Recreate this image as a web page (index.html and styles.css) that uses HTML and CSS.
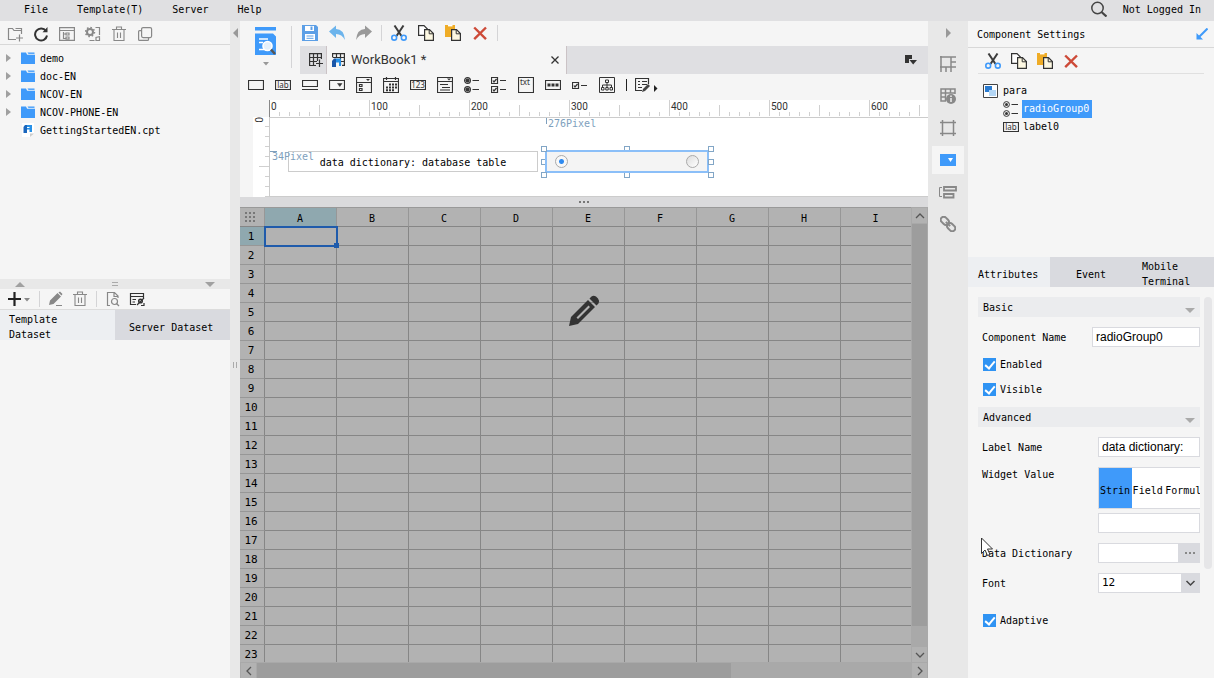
FILE: index.html
```html
<!DOCTYPE html>
<html lang="en">
<head>
<meta charset="utf-8">
<title>Report Designer</title>
<link rel="stylesheet" href="styles.css">
</head>
<body>
<svg class="sprite" aria-hidden="true">
  <symbol id="cut" viewBox="0 0 16 16"><path d="M3.5 0.5L10.5 11M12.5 0.5L5.5 11" stroke="#3c3c3c" stroke-width="2" fill="none"/><circle cx="3.2" cy="12.7" r="2.4" fill="none" stroke="#3f9afa" stroke-width="1.6"/><circle cx="12.8" cy="12.7" r="2.4" fill="none" stroke="#3f9afa" stroke-width="1.6"/></symbol>
  <symbol id="copy" viewBox="0 0 16 16"><path d="M0.6 0.6H6L9.4 4V10.4H0.6Z" fill="#fff" stroke="#333" stroke-width="1.2"/><path d="M6.6 4.6H11.5L15.4 8.5V15.4H6.6Z" fill="#fdf8e2" stroke="#333" stroke-width="1.2"/><path d="M11.2 4.6V8.8H15.4" fill="none" stroke="#333"/></symbol>
  <symbol id="paste" viewBox="0 0 16 16"><path d="M0 0H10V12H0Z" fill="#efac26"/><path d="M3 0H7.5V1.4H3Z" fill="#fff"/><path d="M6.6 4.6H11.5L15.4 8.5V15.4H6.6Z" fill="#fdf8e2" stroke="#333" stroke-width="1.2"/><path d="M11.2 4.6V8.8H15.4" fill="none" stroke="#333"/></symbol>
  <symbol id="remove" viewBox="0 0 16 16"><path d="M2.2 2.5L14 14.2M14 2.5L2.2 14.2" stroke="#cd4a38" stroke-width="2.4"/></symbol>
  <symbol id="trash" viewBox="0 0 16 16"><path d="M1 3.5H15M5.5 3V1H10.500V3M3 4V14.500H13V4M6.500 6.500V12M9.500 6.500V12" fill="none" stroke="#888" stroke-width="1.1"/></symbol>
  <symbol id="folder" viewBox="0 0 14 12"><path d="M0 0.500H5L6 2.500H14V12H0Z" fill="#3f9afa"/><path d="M6.500 0.500H13.500V2H7.500Z" fill="#3f9afa"/><path d="M6 2.300H14" stroke="#d5e9fd" stroke-width="0.800"/></symbol>
  <symbol id="radios" viewBox="0 0 16 16"><g fill="none" stroke="#333"><circle cx="3.500" cy="3.500" r="2.900"/><circle cx="3.500" cy="12.500" r="2.900"/><path d="M8.500 3.500H15M8.500 12.500H15" stroke-width="1.200"/></g><circle cx="3.500" cy="3.500" r="1.500" fill="#333"/><circle cx="3.500" cy="12.500" r="1.500" fill="#333"/></symbol>
</svg>

<header class="menubar">
  <nav class="menus">
    <button>File</button><button>Template(T)</button><button>Server</button><button>Help</button>
  </nav>
  <div class="account">
    <button aria-label="Search"><svg width="16" height="16" viewBox="0 0 16 16" fill="none" stroke="#444"><circle cx="6.500" cy="7" r="5.700" stroke-width="1.500"/><path d="M10.500 11L15.500 15.500" stroke-width="2.200"/></svg></button>
    <button>Not Logged In</button>
  </div>
</header>

<div class="workspace">
  <aside class="left">
    <div class="left-tools">
      <button aria-label="New folder"><svg width="16" height="16" viewBox="0 0 16 16" fill="none" stroke="#888" stroke-width="1.200"><path d="M9 13.500H1.500V2.500H5.500L7 4.500H14.500V8M8.500 2.500H14.500V4M12.500 8.500V15.500M9 12H16"/></svg></button>
      <button aria-label="Refresh"><svg width="16" height="16" viewBox="0 0 16 16"><path d="M13 5A6 6 0 1 0 14 9.500" fill="none" stroke="#333" stroke-width="2"/><path d="M9.500 6.300H14.500V1Z" fill="#333"/></svg></button>
      <button aria-label="Show in tree"><svg width="16" height="16" viewBox="0 0 16 16" fill="none" stroke="#888" stroke-width="1.200"><path d="M0.600 1.600H15.400V14.400H0.600ZM1 4.500H15M4.500 6V12.500H6.500M4.500 8H6.500M7 7H10V9H7ZM7 11H10V13H7Z"/></svg></button>
      <button aria-label="Settings"><svg width="16" height="16" viewBox="0 0 16 16" fill="none" stroke="#888"><circle cx="5" cy="6" r="3" stroke-width="2"/><circle cx="5" cy="6" r="4.500" stroke-dasharray="1.600 1.900" stroke-width="1.500"/><path d="M10.500 1.500H14.500V9M4.500 14.500H9.500M14.500 10.500V14.500H11V11.500L15 10.500" stroke-width="1.200"/></svg></button>
      <button aria-label="Delete"><svg width="16" height="16"><use href="#trash"/></svg></button>
      <button aria-label="Duplicate"><svg width="16" height="16" viewBox="0 0 16 16" fill="none" stroke="#888" stroke-width="1.200"><rect x="4.600" y="1.600" width="10" height="10" rx="1.500"/><path d="M4 4.600H2.500Q1.600 4.600 1.600 5.500V13.500Q1.600 14.400 2.500 14.400H10.500Q11.500 14.400 11.500 13.500V12"/></svg></button>
    </div>
    <ul class="files">
      <li><i class="twist"></i><svg width="14" height="12"><use href="#folder"/></svg>demo</li>
      <li><i class="twist"></i><svg width="14" height="12"><use href="#folder"/></svg>doc-EN</li>
      <li><i class="twist"></i><svg width="14" height="12"><use href="#folder"/></svg>NCOV-EN</li>
      <li><i class="twist"></i><svg width="14" height="12"><use href="#folder"/></svg>NCOV-PHONE-EN</li>
      <li><i class="twist leaf"></i><svg width="14" height="14" viewBox="0 0 14 14"><path d="M1 0H13V10L9 14H1Z" fill="#fff"/><path d="M9 10.500H13L9 14Z" fill="#ccc"/><path d="M2.500 10V4L4 2H6V10Z" fill="#1a66bd"/><path d="M6 2H11V9H8.500V6.500H6Z" fill="#2791e8"/><path d="M6 4H8.500V5H6Z" fill="#fff"/></svg>GettingStartedEN.cpt</li>
    </ul>
    <div class="left-split"><i class="tri up"></i><i class="grip"></i><i class="tri down"></i></div>
    <div class="data-tools">
      <button aria-label="Add"><svg width="24" height="14" viewBox="0 0 24 14"><path d="M7.500 0V14M1 7H14" stroke="#222" stroke-width="2.200"/><path d="M17 6H23L20 9.500Z" fill="#888"/></svg></button>
      <i class="sep"></i>
      <button aria-label="Edit"><svg width="16" height="16" viewBox="0 0 16 16"><path d="M1 14L2 9.500L9.500 2L13 5.500L5.500 13ZM10.500 1.500L12 0.500L14.500 3L13.500 4.500Z" fill="#888"/><path d="M8 14.500H14" stroke="#888"/></svg></button>
      <button aria-label="Delete"><svg width="16" height="16"><use href="#trash"/></svg></button>
      <i class="sep"></i>
      <button aria-label="Preview"><svg width="16" height="16" viewBox="0 0 16 16" fill="none" stroke="#888" stroke-width="1.200"><path d="M5 14.500H2.500V1.500H9.500L13 5V7M9 2V5.500H13"/><circle cx="9.500" cy="10.500" r="3"/><path d="M11.500 12.500L14 15"/></svg></button>
      <button aria-label="Connection"><svg width="16" height="16" viewBox="0 0 16 16" fill="none" stroke="#333" stroke-width="1.200"><path d="M7 13.500H1.500V2.500H14.500V7M1.500 5.500H14M3.500 8.500H7M3.500 11H6"/><circle cx="11.500" cy="10" r="1.800" stroke-width="1.500"/><path d="M8 14L15 7M12 14.500H15V12"/></svg></button>
    </div>
    <div class="tabs dataset-tabs" role="tablist">
      <button class="on" role="tab">Template Dataset</button><button role="tab">Server Dataset</button>
    </div>
  </aside>

  <div class="splitter"><i class="tri left-tri"></i><i class="grip side"></i></div>

  <main class="center">
    <div class="top">
      <button class="preview" aria-label="Preview"><svg width="24" height="40" viewBox="0 0 24 40"><path d="M1 0H22V3.500H1ZM1 6.500H19L22 9.500V28H1Z" fill="#3f9afa"/><path d="M5 12H14M5 15.500H9M5 22.500H14" stroke="#fff" stroke-width="1.700"/><circle cx="13.500" cy="19" r="4.500" fill="#e4f0fb" stroke="#fff" stroke-width="1.600"/><path d="M17 22.500L21 27" stroke="#555" stroke-width="2.500"/><path d="M9 35H15L12 38.500Z" fill="#999"/></svg></button>
      <div class="stack">
        <div class="edit-tools">
          <div class="group">
            <button aria-label="Save"><svg width="16" height="16" viewBox="0 0 16 16"><path d="M0 0H14L16 2V16H0Z" fill="#5c9fe6"/><path d="M3 1H12V6H3ZM3 9H13V15H3Z" fill="#fff"/><path d="M8.500 1.500H10.500V5H8.500Z" fill="#5c9fe6"/><path d="M4.500 11H11.500M4.500 13.300H11.500" stroke="#5c9fe6"/></svg></button>
            <button aria-label="Undo"><svg width="16" height="16" viewBox="0 0 16 16"><path d="M0 6.500L7 0.500V4Q15 4 16 15Q13 9 7 9V13Z" fill="#6cb4ec"/></svg></button>
            <button aria-label="Redo"><svg width="16" height="16" viewBox="0 0 16 16"><path d="M16 6.500L9 0.500V4Q1 4 0 15Q3 9 9 9V13Z" fill="#999"/></svg></button>
          </div>
          <i class="sep"></i>
          <div class="group">
            <button aria-label="Cut"><svg width="16" height="16"><use href="#cut"/></svg></button>
            <button aria-label="Copy"><svg width="16" height="16"><use href="#copy"/></svg></button>
            <button aria-label="Paste"><svg width="16" height="16"><use href="#paste"/></svg></button>
            <button aria-label="Delete"><svg width="16" height="16"><use href="#remove"/></svg></button>
          </div>
          <i class="sep"></i>
        </div>
        <div class="doc-tabs">
          <button class="new-tab" aria-label="New workbook"><svg width="14" height="14" viewBox="0 0 14 14" fill="none" stroke="#333" stroke-width="1.200"><path d="M7 12.500H0.600V0.600H12.400V6M0.600 4.500H12.400M0.600 8.500H8M4.500 0.600V12.500M8.500 0.600V8M10.500 6.500V14M7 10.500H14"/></svg></button>
          <div class="doc-tab">
            <svg width="14" height="14" viewBox="0 0 14 14"><path d="M0.600 4V0.600H12.400V12.400H10M0.600 4.500H12.400M8 8.500H12.400M4.500 0.600V4M8.500 0.600V12" fill="none" stroke="#333" stroke-width="1.200"/><path d="M0 14V8L2 5.500H4V14Z" fill="#1a56a8"/><path d="M4 5.500H9V13H7V9.500H4Z" fill="#2791e8"/></svg>
            <span>WorkBook1 *</span>
            <button aria-label="Close"><svg width="8" height="8" viewBox="0 0 8 8"><path d="M0.500 0.500L7.500 7.500M7.500 0.500L0.500 7.500" stroke="#333" stroke-width="1.300"/></svg></button>
          </div>
          <button class="tab-list" aria-label="Tab list"><svg width="12" height="10" viewBox="0 0 12 10"><path d="M0 0H7V4H4V8H0Z" fill="#333"/><path d="M4.500 5H12L8.200 9.500Z" fill="#333"/></svg></button>
        </div>
      </div>
    </div>

    <div class="widgets">
      <button aria-label="Text field"><svg viewBox="0 0 16 16"><path d="M0.500 3.500H15.500V12.500H0.500Z"/></svg></button>
      <button aria-label="Label"><svg viewBox="0 0 16 16"><path d="M0.500 3.500H15.500V12.500H0.500Z"/><text x="8" y="11" class="glyph-text">lab</text></svg></button>
      <button aria-label="Button"><svg viewBox="0 0 16 16"><path d="M0.500 3.500H15.500V9.500H0.500ZM0 12.500H16"/></svg></button>
      <button aria-label="Drop-down"><svg viewBox="0 0 16 16"><path d="M0.500 3.500H15.500V12.500H0.500Z"/><path d="M8.500 6.500H13L10.800 9.500Z" fill="#333" stroke-width=".5"/></svg></button>
      <button aria-label="Check drop-down"><svg viewBox="0 0 16 16"><path d="M0.500 0.500H15.500V15.500H0.500ZM0.500 5.500H15.500M3.500 7.500H6V9.500H3.500ZM3.500 11.500H6V13.500H3.500Z"/><path d="M10 2H14L12 4Z" fill="#333" stroke="none"/></svg></button>
      <button aria-label="Date"><svg viewBox="0 0 16 16"><path d="M0.500 1.500H15.500V15.500H0.500ZM0.500 4.500H15.500M3.500 0V3M12.500 0V3"/><path d="M6 7.500H14M3 10.500H14M3 13.200H11" stroke-dasharray="2 1" stroke-width="2"/></svg></button>
      <button aria-label="Number"><svg viewBox="0 0 16 16"><path d="M0.500 3.500H15.500V12.500H0.500Z"/><text x="8" y="11" class="glyph-text">123</text></svg></button>
      <button aria-label="Drop-down tree"><svg viewBox="0 0 16 16"><path d="M0.500 0.500H15.500V15.500H0.500ZM0.500 4.500H15.500M3 7.500H11M5 10.500H13M3 13H13"/><path d="M10 1.500H14L12 3.500Z" fill="#333" stroke="none"/></svg></button>
      <button aria-label="Radio group"><svg viewBox="0 0 16 16"><use href="#radios"/></svg></button>
      <button aria-label="Check group"><svg viewBox="0 0 16 16"><path d="M0.500 0.500H6.500V6.500H0.500ZM0.500 9.500H6.500V15.500H0.500ZM2 3.500L3 5L5.500 2M2 12.500L3 14L5.500 11M9 3.500H15M9 12.500H15"/></svg></button>
      <button aria-label="Text area"><svg viewBox="0 0 16 16"><path d="M0.500 0.500H15.500V15.500H0.500Z"/><text x="7" y="8" class="glyph-text">txt</text></svg></button>
      <button aria-label="Password"><svg viewBox="0 0 16 16"><path d="M0.500 3.500H15.500V12.500H0.500Z"/><path d="M2.500 8H14" stroke-width="3" stroke-dasharray="3 1"/></svg></button>
      <button aria-label="Check box"><svg viewBox="0 0 16 16"><path d="M0.500 5.500H6.500V11.500H0.500ZM2 8.500L3 10L5.500 7M9 8.500H15"/></svg></button>
      <button aria-label="Tree"><svg viewBox="0 0 16 16"><path d="M0.500 0.500H15.500V15.500H0.500ZM8 5V8M3.500 10V8H12.500V10M8 8V10M6.500 3H9.500V5.500H6.500ZM2.500 10.500H5V13H2.500ZM6.800 10.500H9.200V13H6.800ZM11 10.500H13.500V13H11Z" stroke-width="1"/></svg></button>
      <i class="bar"></i>
      <button aria-label="More widgets"><svg class="wide" viewBox="0 0 24 16"><path d="M13.500 7V1.500H0.500V13.500H7M3 4.500H5M7 4.500H12M3 7.500H5M7 7.500H12M3 10.500H7"/><path d="M7 15L8 12L13 7L15 9L10 14Z" fill="#444" stroke="none"/><path d="M19 8L22.500 11.500L19 15Z" fill="#222" stroke="none"/></svg></button>
    </div>

    <section class="designer">
      <div class="ruler-x"><span>0</span><span>100</span><span>200</span><span>300</span><span>400</span><span>500</span><span>600</span></div>
      <div class="ruler-y"><span>0</span></div>
      <div class="canvas">
        <div class="label-widget">data dictionary: database table</div>
        <span class="offset-x">276Pixel</span>
        <span class="offset-y">34Pixel</span>
        <div class="radio-widget">
          <i class="handle n mid"></i><i class="handle s mid"></i><i class="handle w mid"></i><i class="handle e"></i>
          <i class="handle n w"></i><i class="handle n e"></i><i class="handle s w"></i><i class="handle s e"></i>
          <input type="radio" name="preview" aria-label="First option" checked><input type="radio" name="preview" aria-label="Second option">
        </div>
      </div>
    </section>
    <div class="row-split"><i></i><i></i><i></i></div>

    <section class="sheet">
      <div class="cells">
        <table>
          <thead><tr id="columns"><th class="corner"><svg width="10" height="10" viewBox="0 0 10 10"><path d="M0 1H10M0 5H10M0 9H10" stroke="#777" stroke-width="2" stroke-dasharray="2 2"/></svg></th></tr></thead>
          <tbody id="rows"></tbody>
        </table>
      </div>
      <div class="scroll vertical"><button aria-label="Scroll up"><svg viewBox="0 0 10 10"><path d="M1 7L5 3L9 7"/></svg></button><i></i><button aria-label="Scroll down"><svg viewBox="0 0 10 10"><path d="M1 3L5 7L9 3"/></svg></button></div>
      <div class="scroll horizontal"><button aria-label="Scroll left"><svg viewBox="0 0 10 10"><path d="M7 1L3 5L7 9"/></svg></button><i></i><button aria-label="Scroll right"><svg viewBox="0 0 10 10"><path d="M3 1L7 5L3 9"/></svg></button></div>
      <svg class="pencil" width="32" height="32" viewBox="0 0 32 32"><path fill="#333" fill-rule="evenodd" d="M1 31L3 22L20 5L27 12L10 29ZM8.500 22.500L10 24L22 12L20.500 10.500ZM21.500 3.500L23.500 1.500Q25.500 0 28 1.500L30 3.500Q32 6 30.500 8.500L28.500 10.500Z"/></svg>
    </section>
  </main>

  <nav class="strip">
    <i class="tri right-tri"></i>
    <button aria-label="Cell element"><svg viewBox="0 0 16 16"><path d="M1 0V16M0 1H16M11 1V16M0 11H16M11 6H16M6 11V16"/></svg></button>
    <button aria-label="Cell attributes"><svg viewBox="0 0 16 16"><path d="M6 13H1V1H15V6M1 5H15M1 9H6M5.500 1V13M10.500 1V5"/><circle cx="11" cy="11" r="5" fill="#888" stroke="none"/><path d="M11 7.500V9M11 10V14" stroke="#eee"/></svg></button>
    <button aria-label="Float element"><svg viewBox="0 0 16 16"><path d="M2.500 0V16M13.500 0V16M0 2.500H16M0 13.500H16"/></svg></button>
    <button class="on" aria-label="Widget settings"><svg viewBox="0 0 16 16"><path d="M0 2H16V14H0Z" fill="#3f9afa" stroke="none"/><path d="M8 6H13L10.500 10Z" fill="#fff" stroke="none"/></svg></button>
    <button aria-label="Condition attributes"><svg class="broad" viewBox="0 0 18 16"><path d="M5 3H17V6.500H5ZM5 10H14.500V13.500H5Z" stroke-width="1.800"/><path d="M3 3.500H0.500V12.500H3" stroke-width="1"/></svg></button>
    <button aria-label="Hyperlink"><svg viewBox="0 0 16 16"><g transform="rotate(45 8 8)" stroke-width="2"><rect x="-1" y="5" width="9" height="6" rx="3"/><rect x="8" y="5" width="9" height="6" rx="3"/><path d="M5 8H11"/></g></svg></button>
  </nav>

  <aside class="right">
    <div class="panel-title"><h2>Component Settings</h2><button aria-label="Dock"><svg width="12" height="12" viewBox="0 0 12 12"><path d="M11.500 0.500L3 9" stroke="#3f9afa" stroke-width="2"/><path d="M0.500 5V11.500H7Z" fill="#3f9afa"/></svg></button></div>
    <div class="panel-tools">
      <button aria-label="Cut"><svg width="16" height="16"><use href="#cut"/></svg></button>
      <button aria-label="Copy"><svg width="16" height="16"><use href="#copy"/></svg></button>
      <button aria-label="Paste"><svg width="16" height="16"><use href="#paste"/></svg></button>
      <button aria-label="Delete"><svg width="16" height="16"><use href="#remove"/></svg></button>
    </div>
    <ul class="components">
      <li><svg width="15" height="14" viewBox="0 0 15 14"><path d="M0.500 0.500H14.500V13.500H0.500Z" fill="#fff" stroke="#444"/><path d="M2 2H9V8H2Z" fill="#2a7bd0"/><path d="M6 6H13V12H6Z" fill="#b3d6f5"/></svg>para
        <ul>
          <li><svg width="16" height="16"><use href="#radios"/></svg><span class="picked">radioGroup0</span></li>
          <li><svg width="16" height="16" viewBox="0 0 16 16"><path d="M0.500 3.500H15.500V12.500H0.500Z" fill="none" stroke="#333" stroke-width="1.200"/><text x="8" y="11" class="glyph-text">lab</text></svg><span>label0</span></li>
        </ul>
      </li>
    </ul>
    <div class="tabs prop-tabs" role="tablist">
      <button class="on" role="tab">Attributes</button><button role="tab">Event</button><button role="tab">Mobile Terminal</button>
    </div>
    <form class="props">
      <div class="fields">
        <h3>Basic<i class="tri down"></i></h3>
        <div class="row name-row"><label for="name">Component Name</label><input id="name" type="text" value="radioGroup0"></div>
        <label class="check"><input type="checkbox" checked>Enabled</label>
        <label class="check"><input type="checkbox" checked>Visible</label>
        <h3>Advanced<i class="tri down"></i></h3>
        <div class="row"><label for="label">Label Name</label><input id="label" type="text" value="data dictionary:"></div>
        <div class="row tall"><label for="value">Widget Value</label>
          <div class="value"><div class="segments"><button type="button" class="on">Strin</button><button type="button">Field</button><button type="button">Formul</button></div><input id="value" type="text"></div>
        </div>
        <div class="row"><label for="dict">Data Dictionary</label><div class="combo"><input id="dict" type="text"><button type="button" aria-label="Browse"><i></i><i></i><i></i></button></div>
          <svg class="pointer" width="12" height="20" viewBox="0 0 12 20"><path d="M0.500 1V16.500L4 13L6.500 18.500L9 17.500L6.500 12H11.500Z" fill="#fff" stroke="#333"/></svg>
        </div>
        <div class="row"><label for="font">Font</label><div class="combo"><select id="font"><option>12</option></select><svg class="chevron" width="19" height="18" viewBox="0 0 19 18"><path d="M5.500 7L9.500 11L13.500 7" fill="none" stroke="#444" stroke-width="1.500"/></svg></div></div>
        <label class="check last"><input type="checkbox" checked>Adaptive</label>
      </div>
      <i class="thumb"></i>
    </form>
  </aside>
</div>
<script src="sheet.js"></script>
</body>
</html>
```

FILE: styles.css
```css
* { box-sizing: border-box; }
body { margin: 0; height: 100vh; display: flex; flex-direction: column; overflow: hidden; background: #f5f5f5; color: #000; font: 10px/15px "DejaVu Sans Mono", monospace; }
button { font: inherit; color: inherit; background: none; border: 0; padding: 0; margin: 0; }
ul { list-style: none; margin: 0; padding: 0; }
h2, h3 { margin: 0; font: inherit; }
svg { display: block; flex: none; }
i { display: block; flex: none; }
.sprite { position: absolute; width: 0; height: 0; }
.glyph-text { font: 8px "Noto Sans", sans-serif; text-anchor: middle; fill: #333; stroke: none; }
.sep { width: 1px; height: 16px; background: #d4d4d6; }
.tri { width: 0; height: 0; border: 5px solid transparent; }
.tri.up { border-top: 0; border-bottom-color: #a0a0a0; }
.tri.down { border-bottom: 0; border-top-color: #a0a0a0; }

.menubar { flex: none; height: 21px; display: flex; justify-content: space-between; align-items: center; padding: 0 13px 3px 24px; background: #e0e0e2; }
.menus { display: flex; gap: 29px; }
.account { display: flex; align-items: center; gap: 16px; }
.workspace { flex: 1; min-height: 0; display: flex; }

.left { width: 230px; flex: none; display: flex; flex-direction: column; }
.left-tools { height: 24px; flex: none; display: flex; align-items: center; gap: 10px; padding: 2px 7px 0; border-bottom: 1px solid #d8d8d8; }
.files { flex: 0 1 234px; padding-top: 4px; overflow: hidden; }
.files li { height: 18px; display: flex; align-items: center; gap: 5px; padding-left: 6px; }
.twist { width: 5px; height: 8px; margin-right: 5px; border: solid transparent; border-width: 4px 0 4px 5px; border-left-color: #a0a0a0; }
.twist.leaf { border-left-color: transparent; }
.left-split { height: 10px; flex: none; display: flex; justify-content: space-between; align-items: center; padding: 0 15px; background: #e8e8e8; }
.grip { width: 6px; height: 4px; border: solid #aaa; border-width: 1px 0; }
.data-tools { height: 21px; flex: none; display: flex; align-items: center; gap: 8px; padding: 0 7px; border-bottom: 1px solid #dcdcdc; }
.tabs { display: grid; grid-template: 30px / 1fr 1fr; flex: none; background: #d9dadf; }
.tabs button { display: flex; align-items: center; text-align: left; }
.tabs .on { background: #edeff2; }
.dataset-tabs button { padding: 4px 14px 0; }
.dataset-tabs .on { padding: 4px 20px 0 9px; }

.splitter { width: 10px; flex: none; background: #e8e8e8; display: flex; flex-direction: column; align-items: center; padding-top: 7px; }
.left-tri { border-left: 0; border-right-color: #999; }
.grip.side { width: 4px; height: 6px; border-width: 0 1px; margin-top: 324px; }

.center { flex: 1; min-width: 0; display: flex; flex-direction: column; }
.top { flex: none; display: flex; }
.preview { width: 52px; height: 42px; margin: 5px 8px 6px 0; border-right: 1px solid #d4d4d6; display: flex; justify-content: center; align-items: center; }
.stack { flex: 1; min-width: 0; }
.edit-tools { height: 25px; display: flex; align-items: center; gap: 9px; padding: 0 2px 1px; }
.group { display: flex; gap: 11px; }
.doc-tabs { height: 28px; display: flex; align-items: stretch; background: #dfdfe2; }
.new-tab { width: 27px; display: flex; align-items: center; justify-content: flex-end; padding-right: 3px; border-right: 1px solid #cbc3c6; }
.doc-tab { width: 240px; display: flex; align-items: center; gap: 5px; padding: 0 7px 0 5px; background: #f5f5f5; border-right: 1px solid #cbc3c6; color: #333; font: 13px/16px Roboto, sans-serif; }
.doc-tab span { flex: 1; }
.tab-list { margin-left: auto; padding-right: 11px; }

.widgets { height: 26px; flex: none; display: flex; align-items: center; gap: 11px; padding: 0 8px 4px; }
.widgets svg { width: 16px; height: 16px; fill: none; stroke: #333; stroke-width: 1.2; }
.widgets .wide { width: 24px; }
.bar { width: 1px; height: 12px; background: #222; }
.widgets .bar + button { margin-left: -3px; }

.designer { flex: none; display: grid; grid-template: 17px 80px / 16px 1fr; margin-left: 13px; }
.ruler-x { grid-column: 2; display: flex; overflow: hidden; border-left: 1px solid #888; background:
  repeating-linear-gradient(90deg, #d0d0d0 0 1px, transparent 1px 100px) -1px 0 / 100% 16px no-repeat,
  repeating-linear-gradient(90deg, #d0d0d0 0 1px, transparent 1px 50px) -1px 5px / 100% 11px no-repeat,
  repeating-linear-gradient(90deg, #d0d0d0 0 1px, transparent 1px 10px) -1px 12px / 100% 4px no-repeat, #fff; }
.ruler-x span { width: 100px; flex: none; padding-left: 1px; font: 10px/13px Roboto, sans-serif; color: #333; }
.ruler-y { grid-column: 1; padding-left: 1px; font: 10px/8px Roboto, sans-serif; color: #333; background:
  repeating-linear-gradient(180deg, transparent 0 9px, #d0d0d0 9px 10px) 12px 0 / 4px 100% no-repeat,
  repeating-linear-gradient(180deg, transparent 0 49px, #d0d0d0 49px 50px) 6px 0 / 10px 100% no-repeat, #fff; }
.ruler-y span { display: block; width: 8px; writing-mode: vertical-rl; }
.canvas { position: relative; background: #fff; border: 1px solid #ccc; border-right: 0; overflow: hidden; }
.label-widget { position: absolute; left: 18px; top: 33px; width: 250px; height: 21px; border: 1px solid #ccc; text-align: center; line-height: 21px; }
.offset-x, .offset-y { position: absolute; color: #7e9fbd; line-height: 12px; }
.offset-x { left: 276px; top: 0; padding-left: 2px; }
.offset-x::before { content: ""; position: absolute; left: 0; top: 0; width: 1px; height: 6px; background: #7e9fbd; }
.offset-y { left: 0; top: 33px; padding-left: 2px; }
.offset-y::before { content: ""; position: absolute; left: 0; top: 0; width: 7px; height: 1px; background: #7e9fbd; }
.radio-widget { position: absolute; left: 275px; top: 32px; width: 164px; height: 23px; border: 2px solid #8bbff8; background: #f4f4f4; display: flex; align-items: center; justify-content: space-between; padding: 0 8px; }
.radio-widget input { appearance: none; width: 13px; height: 13px; margin: 0; border: 1px solid #aaa; border-radius: 50%; background: linear-gradient(135deg, #ddd, #fff); }
.radio-widget input:checked { background: radial-gradient(circle, #2f8bf0 0 2px, #f8f8f8 3px); }
.handle { position: absolute; width: 6px; height: 6px; left: 77px; top: 7px; border: 1px solid #82a6c6; background: #fff; }
.handle.n { top: -6px; }
.handle.s { top: 20px; }
.handle.w { left: -6px; }
.handle.e { left: 161px; }
.handle.n.mid { height: 4px; border-bottom: 0; }
.handle.s.mid { top: 21px; height: 5px; border-top: 0; }
.handle.w.mid { width: 4px; border-right: 0; }
.row-split { height: 10px; flex: none; background: #dadadc; display: flex; align-items: center; justify-content: center; gap: 2px; }
.row-split i { width: 2px; height: 2px; background: #777; }

.sheet { position: relative; flex: 1; min-height: 0; display: grid; grid-template: 1fr 16px / 1fr 17px; background: #b2b2b2; }
.cells { overflow: hidden; min-height: 0; min-width: 0; }
table { width: 100%; table-layout: fixed; border-collapse: separate; border-spacing: 0; }
th, td { width: 72px; height: 19px; padding: 0; border: solid #868686; border-width: 0 1px 1px 0; font-weight: normal; line-height: 15px; }
thead th { height: 20px; padding: 2px 1px 0 0; border-top: 1px solid #999; border-right-color: #979797; }
th:last-child, td:last-child { width: auto; border-right: 0; }
thead th:first-child { width: 25px; padding: 0 4px 0 0; }
tbody th { font: 11px/15px "DejaVu Sans Mono", monospace; border-bottom-color: #979797; padding-right: 2px; }
.corner svg { margin: 0 auto; }
.active { background: #8fa8af; }
.selected { position: relative; }
.selected::before { content: ""; position: absolute; inset: -1px -2px -2px -1px; border: 2px solid #1f5bab; }
.selected::after { content: ""; position: absolute; right: -3px; bottom: -3px; width: 5px; height: 5px; background: #1f5bab; }
.scroll { display: flex; background: #a9a9a9; }
.scroll button { width: 15px; height: 15px; flex: none; background: #b2b2b2; display: grid; place-items: center; }
.scroll svg { width: 10px; height: 10px; fill: none; stroke: #555; stroke-width: 1.3; }
.scroll i { background: #9d9d9d; }
.vertical { flex-direction: column; align-items: center; padding-top: 1px; gap: 1px; }
.vertical i { width: 15px; flex: 0 1 402px; min-height: 20px; }
.vertical i + button { margin-top: auto; }
.horizontal { grid-column: 1 / 3; padding: 1px 0 0 1px; gap: 1px; }
.horizontal i { flex: 0 1 69%; }
.horizontal i + button { margin: 0 1px 0 auto; }
.pencil { position: absolute; top: 88px; left: 50%; margin-left: -16px; }

.strip { width: 40px; flex: none; background: #e8e8e8; display: flex; flex-direction: column; align-items: center; gap: 4px; padding-top: 7px; }
.right-tri { border-right: 0; border-left-color: #999; margin-bottom: 8px; }
.strip button { width: 32px; height: 28px; display: grid; place-items: center; }
.strip .on { background: #f5f5f5; }
.strip svg { width: 16px; height: 16px; fill: none; stroke: #888; stroke-width: 1.5; }
.strip .broad { width: 18px; }

.right { width: 246px; flex: none; display: flex; flex-direction: column; }
.panel-title { height: 27px; flex: none; display: flex; justify-content: space-between; align-items: center; padding: 0 6px 0 9px; border-bottom: 1px solid #d8d8d8; }
.panel-tools { height: 26px; flex: none; display: flex; align-items: center; gap: 10px; margin: 0 10px; padding-left: 7px; border-bottom: 1px solid #e0e0e0; }
.components { height: 183px; flex: none; padding: 8px 0 0 15px; }
.components li { display: flex; flex-wrap: wrap; align-items: center; gap: 0 5px; line-height: 18px; }
.components ul { width: 100%; padding-left: 20px; }
.components ul li { gap: 3px; height: 18px; }
.components span { padding: 0 1px; }
.components .picked { background: #3f9afa; color: #fff; padding-right: 3px; }
.prop-tabs { grid-template-columns: 1fr 1fr 1fr; }
.prop-tabs button { padding: 4px 10px 0; }
.prop-tabs button:nth-child(2) { justify-content: center; }
.props { flex: 1; display: flex; gap: 4px; padding: 10px 2px 0 10px; }
.fields { flex: 1; min-width: 0; }
.fields h3 { height: 20px; display: flex; justify-content: space-between; align-items: center; padding: 0 5px; background: #ebecee; margin-bottom: 10px; }
.fields h3 .tri { margin-top: 6px; border-top-color: #aaa; }
.row { position: relative; display: grid; grid-template-columns: 116px minmax(0, 1fr); align-items: center; min-height: 20px; padding-left: 4px; margin-bottom: 10px; }
.name-row { grid-template-columns: 110px minmax(0, 1fr); }
.tall { align-items: start; }
input[type="text"], select { width: 100%; min-width: 0; height: 20px; padding: 0 3px; background: #fff; border: 1px solid #d9dadf; border-radius: 0; color: #000; font: 12px/18px "Liberation Sans", sans-serif; outline: none; }
.check { display: flex; align-items: center; gap: 4px; height: 15px; padding-left: 5px; margin-bottom: 10px; }
.check input { appearance: none; width: 13px; height: 13px; margin: 0; background: #2f93f3; display: grid; place-items: center; }
.check input::after { content: ""; width: 4px; height: 8px; margin-bottom: 2px; border: solid #fff; border-width: 0 2px 2px 0; transform: rotate(40deg); }
.last { margin-top: 20px; }
.value { display: grid; gap: 4px; }
.segments { height: 42px; display: flex; overflow: hidden; background: #fff; border: 1px solid #d9dadf; border-right: 0; }
.segments button { flex: 1 1 0; min-width: 0; text-align: left; padding: 4px 0 0 1px; }
.segments button:last-child { flex-grow: 1.1; }
.segments .on { background: #3f9afa; }
.combo { display: flex; position: relative; }
.combo button { width: 21px; flex: none; display: flex; justify-content: center; align-items: center; gap: 2px; background: #d9dadf; }
.combo button i { width: 2px; height: 2px; background: #888; }
select { appearance: none; font: 11px/18px "DejaVu Sans Mono", monospace; }
.chevron { position: absolute; right: 0; top: 1px; background: #d9dadf; pointer-events: none; }
.pointer { position: absolute; left: 3px; top: -6px; }
.thumb { width: 8px; height: 272px; border-radius: 4px; background: #e6e6e8; }
```

FILE: sheet.js
```js
const columns = document.getElementById("columns");
const rows = document.getElementById("rows");

[..."ABCDEFGHI"].forEach((name, index) => {
  const th = document.createElement("th");
  th.textContent = name;
  if (index === 0) th.className = "active";
  columns.append(th);
});

for (let n = 1; n <= 23; n++) {
  const tr = document.createElement("tr");
  const th = document.createElement("th");
  th.textContent = n;
  if (n === 1) th.className = "active";
  tr.append(th);
  for (let c = 0; c < 9; c++) {
    const td = document.createElement("td");
    if (n === 1 && c === 0) td.className = "selected";
    tr.append(td);
  }
  rows.append(tr);
}
```
